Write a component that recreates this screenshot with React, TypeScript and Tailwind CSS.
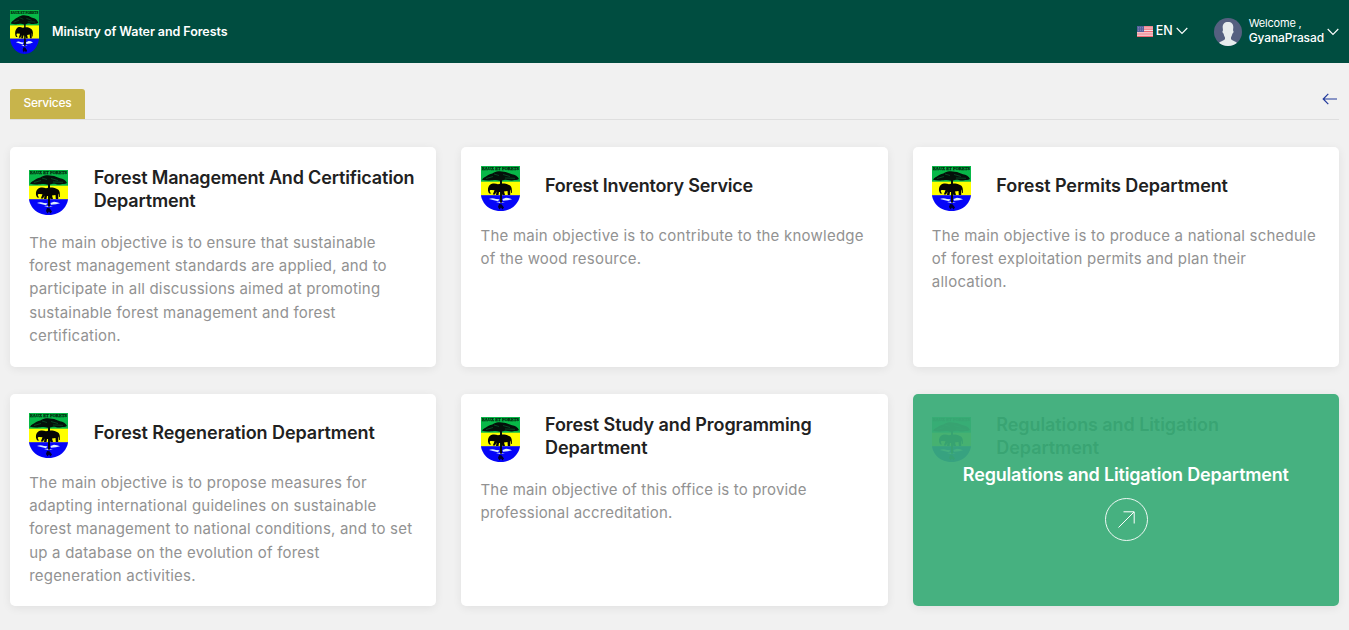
import React from "react";

function Crest({ className }: { className: string }) {
  return (
    <svg viewBox="0 0 39 45" preserveAspectRatio="none" className={className} aria-hidden="true">
      <defs>
        <clipPath id="shield">
          <path d="M0 0H39V29C38.500 35 33 45 19.500 45C6 45 .5 35 0 29Z" />
        </clipPath>
      </defs>
      <g clipPath="url(#shield)">
        <rect width="39" height="16" fill="#08b848" />
        <rect y="15.700" width="39" height="14" fill="#ffff00" />
        <rect y="29.200" width="39" height="16" fill="#0505f8" />
        <path
          d="M1 13.800C2 11.500 5 10.800 6 9.800C8 8 11 8 13 6.500C16 5 20 5 23 5.800C26 6 28 7.500 31 8.300C34 8.800 37 10.500 38 13C36 14.500 34 13.500 32 14.200C29 15 27 13.500 24 13.700L21 14.500V35H19V14.800C15 13.500 13 14.500 10 14.200C7 15 4 14.200 1 13.800Z"
          fill="#04100a"
        />
        <path d="M5 12.500L12 10.500M13 8L18 9.500M22 8.500L29 10.500M24 12L34 12.300" stroke="#0a6a34" strokeWidth=".6" />
        <path
          d="M8.300 27.500C6.500 25.500 6.300 21 9 18.800C11 17 14.500 17.200 17 18.200C20 17.200 25 17.400 27.500 18.800C30.500 20 31.200 22 30.800 27H30C30 25 29.800 24 29.300 23.500L29.200 29H26.800L26.500 25L23 25.500L24 29H21.500L20 26L18 26L17.500 29H15L15.500 25.500L14 28.500H11.800L13.500 24.200L10.500 24C8.500 23.600 8.500 25 9.300 26.500L10.300 27.500Z"
          fill="#050505"
        />
        <path d="M8 33Q11 31.300 15 33L18.500 33.300L17 35.300L13 34.300ZM21.500 33L25 31.800Q28 31.800 31 33.300L27 34.300L22 34.800ZM15 36L18 35.700L24 36.300L19 37Z" fill="#dcecff" />
        <path d="M19 30H21V36L20 37.500L19 36Z" fill="#050510" />
        <path d="M18 38L20.500 38.300L23 41.500L21.500 43.500L20 41.500L18.500 43.500L17 41Z" fill="#000030" />
      </g>
      <text x="1" y="4.300" textLength="37" lengthAdjust="spacingAndGlyphs" className="font-['Liberation_Serif',serif] text-[4.500px] font-bold" fill="#001c08" stroke="#001c08" strokeWidth=".25">
        EAUX ET FORETS
      </text>
    </svg>
  );
}

function Chevron() {
  return (
    <svg viewBox="0 0 12 8" className="h-2 w-3 shrink-0" fill="none" stroke="#fff" strokeWidth="1.1">
      <path d="M.7 1L6 6.500L11.300 1" />
    </svg>
  );
}

function Flag() {
  return (
    <svg viewBox="0 0 16 11" className="h-[11px] w-4" aria-hidden="true">
      <rect width="16" height="11" fill="#f6dfe2" />
      <path d="M0 .8H16M0 3.200H16M0 5.600H16M0 8H16M0 10.300H16" stroke="#ee6874" strokeWidth="1.200" />
      <rect width="7" height="6" fill="#56609c" />
      <path d="M1 1.500H6M1 3H6M1 4.500H6" stroke="#8e9ac4" strokeWidth=".6" strokeDasharray="1 1" />
    </svg>
  );
}

function Avatar() {
  return (
    <svg viewBox="0 0 28 28" className="size-7" aria-hidden="true">
      <defs>
        <clipPath id="disc"><circle cx="14" cy="14" r="14" /></clipPath>
      </defs>
      <g clipPath="url(#disc)">
        <rect width="28" height="28" fill="#556080" />
        <path d="M14 4C17.500 4 19.500 6 19.300 9.500L19 12.500C20 13 19.500 15 18.500 15.500C18 17.500 17.300 18.500 17 19.500V21C17.500 22.500 22 23.200 23.500 25.500V28H4.500V25.500C6 23.200 10.500 22.500 11 21V19.500C10.500 18.500 10 17.500 9.500 15.500C8.500 15 8 13 9 12.500L8.700 9.500C8.500 6 10.500 4 14 4Z" fill="#e7eced" />
      </g>
    </svg>
  );
}

type Service = { title: string[]; titleTracking: string; body: string[]; tracking: string };

const services: Service[] = [
  {
    title: ["Forest Management And Certification", "Department"],
    titleTracking: "tracking-[-0.160px]",
    tracking: "tracking-[0.2px]",
    body: [
      "The main objective is to ensure that sustainable",
      "forest management standards are applied, and to",
      "participate in all discussions aimed at promoting",
      "sustainable forest management and forest",
      "certification.",
    ],
  },
  {
    title: ["Forest Inventory Service"],
    titleTracking: "tracking-[-0.190px]",
    tracking: "tracking-[0.230px]",
    body: ["The main objective is to contribute to the knowledge", "of the wood resource."],
  },
  {
    title: ["Forest Permits Department"],
    titleTracking: "tracking-[-0.080px]",
    tracking: "tracking-[0.220px]",
    body: [
      "The main objective is to produce a national schedule",
      "of forest exploitation permits and plan their",
      "allocation.",
    ],
  },
  {
    title: ["Forest Regeneration Department"],
    titleTracking: "tracking-[-0.070px]",
    tracking: "tracking-[0.210px]",
    body: [
      "The main objective is to propose measures for",
      "adapting international guidelines on sustainable",
      "forest management to national conditions, and to set",
      "up a database on the evolution of forest",
      "regeneration activities.",
    ],
  },
  {
    title: ["Forest Study and Programming", "Department"],
    titleTracking: "tracking-[-0.090px]",
    tracking: "tracking-[0.160px]",
    body: ["The main objective of this office is to provide", "professional accreditation."],
  },
  {
    title: ["Regulations and Litigation", "Department"],
    titleTracking: "tracking-[-0.080px]",
    tracking: "tracking-[0.2px]",
    body: [],
  },
];

function ServiceCard({ service, active }: { service: Service; active: boolean }) {
  return (
    <article className="relative overflow-hidden rounded-[5px] bg-white px-[19.200px] pt-[19px] shadow-[0_2px_10px_rgba(0,0,0,0.07)]">
      <div className="mb-[13px] flex items-center">
        <Crest className="mr-[25.500px] h-[45px] w-[39px] shrink-0" />
        <h2 className={`pb-1.5 text-[18px] leading-[23px] font-semibold whitespace-nowrap text-[#212121] ${service.titleTracking}`}>
          {service.title.map((line) => (
            <span key={line} className="block">{line}</span>
          ))}
        </h2>
      </div>
      <p className={`text-[15px] leading-[23.200px] whitespace-nowrap text-[#929292] ${service.tracking}`}>
        {service.body.map((line) => (
          <span key={line} className="block">{line}</span>
        ))}
      </p>
      {active && (
        <div className="absolute inset-0 flex flex-col items-center bg-[#3aac78]/94 pt-[69px] text-white">
          <span className="text-[18px] leading-[23px] font-semibold tracking-[-0.180px] whitespace-nowrap">Regulations and Litigation Department</span>
          <span className="mt-3 ml-px flex size-[43px] items-center justify-center rounded-full border border-white/90">
            <svg viewBox="0 0 17 17" className="size-[17px]" fill="none" stroke="currentColor" strokeWidth="1">
              <path d="M.5 16.500L16 1M5.500 .8H16.200V12.500" />
            </svg>
          </span>
        </div>
      )}
    </article>
  );
}

export default function App() {
  return (
    <div className="h-[630px] overflow-hidden bg-[#f1f1f1] font-['Inter',sans-serif]">
      <header className="flex h-[63px] items-center bg-[#004d40] px-[10px] text-white">
        <Crest className="mr-[13px] h-11 w-[29px]" />
        <h1 className="pt-0.5 text-[12.500px] font-semibold tracking-[-0.080px] whitespace-nowrap">Ministry of Water and Forests</h1>
        <div className="ml-auto flex items-center">
          <button className="mr-[26px] flex items-center pb-px text-[12.500px] font-medium">
            <Flag />
            <span className="mr-[3px] ml-[3px] tracking-[-0.1px]">EN</span>
            <Chevron />
          </button>
          <button className="flex items-center text-left">
            <Avatar />
            <span className="mr-[3px] ml-[7px] flex flex-col pb-px leading-[14px] whitespace-nowrap">
              <span className="text-[11px] leading-[13.500px] tracking-[-0.180px]">Welcome ,</span>
              <span className="text-[12px] leading-[15px] font-medium tracking-[-0.1px]">GyanaPrasad</span>
            </span>
            <Chevron />
          </button>
        </div>
      </header>
      <main className="px-[10px] pt-[26px]">
        <div className="flex h-[31px] items-start justify-between border-b border-[#dfdfdf]">
          <button className="h-[30px] w-[75px] rounded-t-[3px] bg-[#c8b44b] pb-[3px] text-[12px] font-medium tracking-[-0.230px] text-white">
            Services
          </button>
          <svg viewBox="0 0 16 12" className="mt-1 mr-px h-3 w-4" fill="none" stroke="#223a9c" strokeWidth="1.200">
            <path d="M15 6H1.200M6.300 .9L1.200 6L6.300 11.100" />
          </svg>
        </div>
        <section className="mt-[27px] grid grid-cols-3 grid-rows-[220px_212px] gap-x-[25px] gap-y-[27px]">
          {services.map((service, index) => (
            <ServiceCard key={service.title[0]} service={service} active={index === 5} />
          ))}
        </section>
      </main>
    </div>
  );
}
